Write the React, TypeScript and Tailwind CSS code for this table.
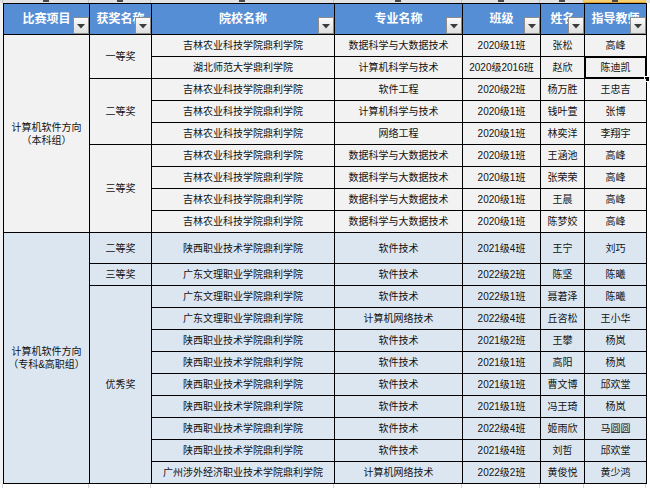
import React from 'react';

type Row = [string, string, string, string, string];

interface Group {
  award: string;
  rows: Row[];
}

interface Section {
  title: string[];
  bg: string;
  groups: Group[];
}

const JL = "吉林农业科技学院鼎利学院";
const SX = "陕西职业技术学院鼎利学院";
const GD = "广东文理职业学院鼎利学院";
const BIG = "数据科学与大数据技术";

const SECTIONS: Section[] = [
  {
    title: ["计算机软件方向", "（本科组）"],
    bg: "bg-[#f2f2f2]",
    groups: [
      {
        award: "一等奖",
        rows: [
          [JL, BIG, "2020级1班", "张松", "高峰"],
          ["湖北师范大学鼎利学院", "计算机科学与技术", "2020级2016班", "赵欣", "陈迪凯"],
        ],
      },
      {
        award: "二等奖",
        rows: [
          [JL, "软件工程", "2020级2班", "杨万胜", "王忠吉"],
          [JL, "计算机科学与技术", "2020级1班", "钱叶萱", "张博"],
          [JL, "网络工程", "2020级1班", "林奕洋", "李翔宇"],
        ],
      },
      {
        award: "三等奖",
        rows: [
          [JL, BIG, "2020级1班", "王涵池", "高峰"],
          [JL, BIG, "2020级1班", "张荣荣", "高峰"],
          [JL, BIG, "2020级1班", "王晨", "高峰"],
          [JL, BIG, "2020级1班", "陈梦姣", "高峰"],
        ],
      },
    ],
  },
  {
    title: ["计算机软件方向", "（专科&高职组）"],
    bg: "bg-[#dce6f1]",
    groups: [
      { award: "二等奖", rows: [[SX, "软件技术", "2021级4班", "王宁", "刘巧"]] },
      { award: "三等奖", rows: [[GD, "软件技术", "2022级2班", "陈坚", "陈曦"]] },
      {
        award: "优秀奖",
        rows: [
          [GD, "软件技术", "2022级1班", "聂莙泽", "陈曦"],
          [GD, "计算机网络技术", "2022级4班", "丘咨松", "王小华"],
          [SX, "软件技术", "2021级2班", "王攀", "杨岚"],
          [SX, "软件技术", "2021级1班", "高阳", "杨岚"],
          [SX, "软件技术", "2021级1班", "曹文博", "邱欢堂"],
          [SX, "软件技术", "2021级1班", "冯王琦", "杨岚"],
          [SX, "软件技术", "2022级4班", "姬雨欣", "马圆圆"],
          [SX, "软件技术", "2021级4班", "刘哲", "邱欢堂"],
          ["广州涉外经济职业技术学院鼎利学院", "计算机网络技术", "2022级2班", "黄俊悦", "黄少鸿"],
        ],
      },
    ],
  },
];

const HEADERS = ["比赛项目", "获奖名称", "院校名称", "专业名称", "班级", "姓名", "指导教师"];
const COL_W = ["w-[86px]", "w-[62px]", "w-[183px]", "w-[128px]", "w-[78px]", "w-[44px]", "w-[62px]"];

const SPAN: Record<number, string> = {
  1: "row-span-1",
  2: "row-span-2",
  3: "row-span-3",
  4: "row-span-4",
  9: "row-span-9",
  11: "row-span-11",
};

const FilterButton = () => (
  <div className="absolute right-0 bottom-0 w-4 h-[17px] border border-[#8c8c8c] bg-gradient-to-b from-[#fbfbfb] to-[#dedede] flex items-center justify-center">
    <svg width="8" height="5" viewBox="0 0 8 5" className="mt-[2px]">
      <path d="M0 0h8L4 4.5z" fill="#3c3c3c" />
    </svg>
  </div>
);

const App: React.FC = () => {
  const cells: React.ReactNode[] = [];

  HEADERS.forEach(h => {
    cells.push(
      <div key={"h" + h} className="relative bg-[#558ed5] flex items-center justify-center overflow-hidden">
        <span className="text-white font-bold text-[12px] whitespace-nowrap">{h}</span>
        <FilterButton />
      </div>
    );
  });

  SECTIONS.forEach((sec, si) => {
    const total = sec.groups.reduce((n, g) => n + g.rows.length, 0);
    sec.groups.forEach((g, gi) => {
      g.rows.forEach((r, ri) => {
        const k = `${si}-${gi}-${ri}`;
        if (gi === 0 && ri === 0) {
          cells.push(
            <div key={"t" + k} className={`${SPAN[total]} ${sec.bg} flex flex-col items-center justify-center leading-[13px]`}>
              {sec.title.map(t => <span key={t}>{t}</span>)}
            </div>
          );
        }
        if (ri === 0) {
          cells.push(
            <div key={"a" + k} className={`${SPAN[g.rows.length]} ${sec.bg} flex items-center justify-center`}>
              {g.award}
            </div>
          );
        }
        r.forEach((v, ci) => {
          const selected = si === 0 && gi === 0 && ri === 1 && ci === 4;
          cells.push(
            <div key={k + "c" + ci} className={`relative ${sec.bg} flex items-center justify-center whitespace-nowrap`}>
              {v}
              {selected && (
                <>
                  <div className="absolute -left-px -top-px -right-px -bottom-px border-2 border-black" />
                  <div className="absolute -right-[4px] -bottom-[4px] w-[6px] h-[6px] bg-black border border-white" />
                </>
              )}
            </div>
          );
        });
      });
    });
  });

  return (
    <div className="w-[650px] h-[488px] overflow-hidden bg-white text-[10px] text-[#111]" style={{ fontFamily: '"Liberation Sans", "Noto Sans CJK SC", sans-serif' }}>
      {/* column letter strip */}
      <div className="flex h-[3px] bg-[#e3e3e3]">
        <div className="w-[3px] border-r border-[#c6c6c6]" />
        {COL_W.map((w, i) => (
          <div key={i} className={`${w} flex justify-center border-r border-[#c6c6c6] ${i === 6 ? "bg-[#f6cf6f] border-b border-b-[#e2a437]" : ""}`}>
            <div className="w-[6px] h-[2px] bg-[#4a4a4a]" />
          </div>
        ))}
      </div>

      <div className="flex">
        <div className="w-[3px] bg-[#f1f1f1]" />
        <div className="grid bg-black p-px gap-px grid-cols-[85px_61px_182px_127px_77px_43px_61px] grid-rows-[30px_repeat(9,21px)_30px_repeat(10,21px)]">
          {cells}
        </div>
      </div>

      {/* sheet gridlines below the table */}
      <div className="flex h-[4px]">
        <div className="w-[3px] border-r border-[#d4d4d4]" />
        {COL_W.map((w, i) => (
          <div key={i} className={`${w} border-r border-[#d4d4d4]`} />
        ))}
      </div>
    </div>
  );
};

export default App;
